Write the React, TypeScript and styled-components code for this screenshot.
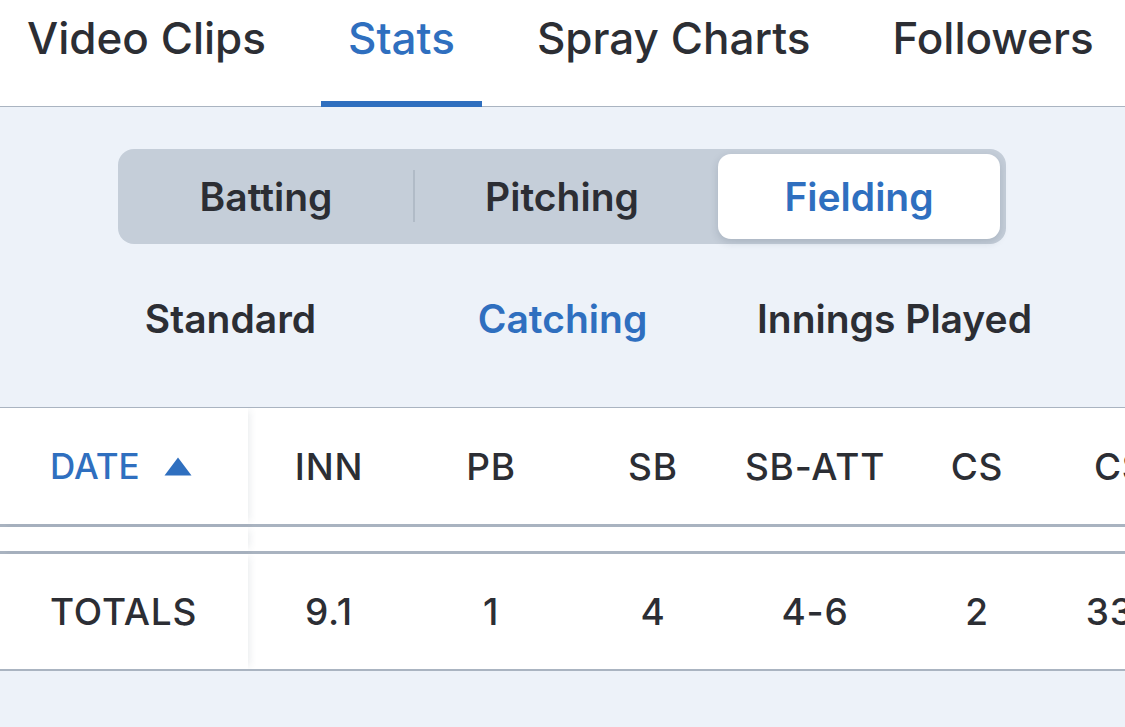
import React from 'react';
import styled, { createGlobalStyle } from 'styled-components';

const GlobalStyle = createGlobalStyle`
  html, body {
    margin: 0;
    padding: 0;
    background: #edf2f9;
    font-family: Inter, "Noto Sans", sans-serif;
    color: #2c2e34;
  }
`;

const Page = styled.div`
  width: 1125px;
  height: 727px;
  overflow: hidden;
  background: #edf2f9;
`;

const TabBar = styled.nav`
  display: flex;
  gap: 28px;
  height: 106px;
  background: #ffffff;
  border-bottom: 1px solid #aab4c1;
  box-sizing: content-box;
  white-space: nowrap;
`;

const Tab = styled.div<{ $active?: boolean }>`
  position: relative;
  display: flex;
  align-items: center;
  padding: 0 27px 30px;
  font-size: 44px;
  font-weight: 500;
  color: ${(p) => (p.$active ? '#2f6fbf' : '#2c2e34')};
  &::after {
    content: '';
    display: ${(p) => (p.$active ? 'block' : 'none')};
    position: absolute;
    left: 0;
    right: 0;
    bottom: -1px;
    height: 6px;
    background: #2f6fbf;
  }
`;

const Filters = styled.section`
  display: flex;
  flex-direction: column;
  align-items: center;
  height: 300px;
  padding-top: 42px;
  box-sizing: border-box;
`;

const Segmented = styled.div`
  display: grid;
  grid-template-columns: repeat(3, 1fr);
  width: 888px;
  height: 95px;
  margin-left: -1px;
  background: #c5ced9;
  border-radius: 16px;
`;

const Segment = styled.div<{ $active?: boolean; $divider?: boolean }>`
  position: relative;
  display: flex;
  align-items: center;
  justify-content: center;
  margin: ${(p) => (p.$active ? '5px 6px 5px 8px' : '0')};
  font-size: 39px;
  font-weight: 600;
  color: ${(p) => (p.$active ? '#2f6fbf' : '#2c2e34')};
  background: ${(p) => (p.$active ? '#ffffff' : 'transparent')};
  border-radius: 13px;
  box-shadow: ${(p) => (p.$active ? '0 3px 8px rgba(40, 55, 80, 0.18)' : 'none')};
  &::after {
    content: '';
    display: ${(p) => (p.$divider ? 'block' : 'none')};
    position: absolute;
    right: -1px;
    top: 21px;
    bottom: 22px;
    width: 2px;
    background: #b1bbc7;
  }
`;

const SubTabs = styled.div`
  display: grid;
  grid-template-columns: 332px 332px 332px;
  margin-top: 40px;
`;

const SubTab = styled.div<{ $active?: boolean }>`
  text-align: center;
  font-size: 39px;
  font-weight: 600;
  line-height: 70px;
  color: ${(p) => (p.$active ? '#2f6fbf' : '#2c2e34')};
`;

const Table = styled.div`
  background: #ffffff;
  border-top: 1px solid #aab4c1;
  border-bottom: 2px solid #aab4c1;
  overflow: hidden;
`;

const Row = styled.div<{ $height: number; $border?: boolean }>`
  display: flex;
  height: ${(p) => p.$height}px;
  border-bottom: ${(p) => (p.$border ? '3px solid #a9b3c0' : 'none')};
  white-space: nowrap;
`;

const FirstCell = styled.div<{ $accent?: boolean }>`
  flex: 0 0 248px;
  display: flex;
  align-items: center;
  gap: 24px;
  padding-left: 50px;
  box-sizing: border-box;
  font-size: ${(p) => (p.$accent ? '35px' : '37px')};
  font-weight: 500;
  letter-spacing: ${(p) => (p.$accent ? '0' : '0.8px')};
  color: ${(p) => (p.$accent ? '#2f6fbf' : '#2c2e34')};
  box-shadow: 5px 0 7px -3px rgba(60, 75, 100, 0.1);
  position: relative;
  z-index: 1;
  background: #ffffff;
`;

const Cell = styled.div`
  flex: 0 0 162px;
  display: flex;
  align-items: center;
  justify-content: center;
  font-size: 37px;
  font-weight: 500;
  letter-spacing: 0.8px;
`;

const SortArrow = () => (
  <svg width="28" height="19" viewBox="0 0 28 19">
    <path d="M14 0.5 L27.5 18.5 L0.5 18.5 Z" fill="#2f6fbf" />
  </svg>
);

const headers = ['INN', 'PB', 'SB', 'SB-ATT', 'CS', 'CS%'];
const totals = ['9.1', '1', '4', '4-6', '2', '33.33'];

export default function App() {
  return (
    <Page>
      <GlobalStyle />
      <TabBar>
        <Tab>Video Clips</Tab>
        <Tab $active>Stats</Tab>
        <Tab>Spray Charts</Tab>
        <Tab>Followers</Tab>
      </TabBar>
      <Filters>
        <Segmented>
          <Segment $divider>Batting</Segment>
          <Segment>Pitching</Segment>
          <Segment $active>Fielding</Segment>
        </Segmented>
        <SubTabs>
          <SubTab>Standard</SubTab>
          <SubTab $active>Catching</SubTab>
          <SubTab>Innings Played</SubTab>
        </SubTabs>
      </Filters>
      <Table>
        <Row $height={116} $border>
          <FirstCell $accent>
            DATE
            <SortArrow />
          </FirstCell>
          {headers.map((h) => (
            <Cell key={h}>{h}</Cell>
          ))}
        </Row>
        <Row $height={24} $border>
          <FirstCell />
        </Row>
        <Row $height={115}>
          <FirstCell>TOTALS</FirstCell>
          {totals.map((t, i) => (
            <Cell key={i}>{t}</Cell>
          ))}
        </Row>
      </Table>
    </Page>
  );
}
